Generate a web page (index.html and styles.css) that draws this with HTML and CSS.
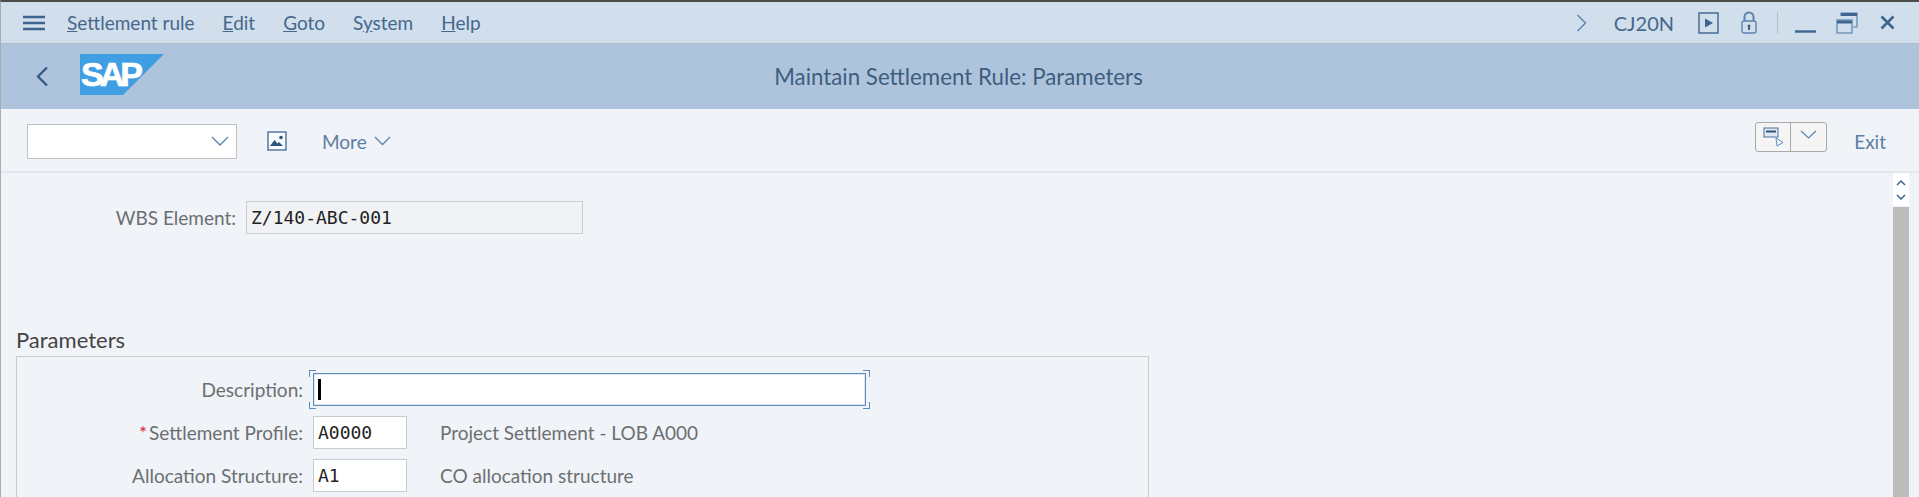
FILE: index.html
```html
<!DOCTYPE html>
<html lang="en">
<head>
    <meta charset="UTF-8">
    <title>Maintain Settlement Rule: Parameters</title>
    <link rel="stylesheet" href="styles.css">
</head>
<body>
    <div class="window">
        <!-- Menu bar -->
        <div class="menubar">
            <svg class="burger" width="22" height="16" viewBox="0 0 22 16">
                <path d="M0 2h22M0 8h22M0 14h22" stroke="#3d6590" stroke-width="2.4" fill="none"/>
            </svg>
            <nav class="menu">
                <span><u>S</u>ettlement rule</span>
                <span><u>E</u>dit</span>
                <span><u>G</u>oto</span>
                <span>S<u>y</u>stem</span>
                <span><u>H</u>elp</span>
            </nav>
            <div class="menubar-right">
                <svg class="tx-arrow" width="11" height="18" viewBox="0 0 11 18">
                    <path d="M1.5 1l8 8-8 8" stroke="#5b84b1" stroke-width="1.4" fill="none"/>
                </svg>
                <span class="tcode">CJ20N</span>
                <svg class="play" width="21" height="22" viewBox="0 0 21 22">
                    <rect x="1" y="1" width="19" height="20" fill="none" stroke="#3d6590" stroke-width="1.4"/>
                    <path d="M7 6.5l8 4.5-8 4.5z" fill="#3d6590"/>
                </svg>
                <svg class="lock" width="16" height="23" viewBox="0 0 16 23">
                    <path d="M3.5 10V6a4.5 4.5 0 0 1 9 0v4" fill="none" stroke="#5b84b1" stroke-width="2"/>
                    <rect x="1" y="10" width="14" height="12" rx="2" fill="none" stroke="#5b84b1" stroke-width="1.4"/>
                    <path d="M8 13l2 2.5H9V19H7v-3.5H6z" fill="#3d6590"/>
                </svg>
                <i class="sep"></i>
                <svg class="min" width="21" height="22" viewBox="0 0 21 22">
                    <path d="M0 19.5h21" stroke="#3d6590" stroke-width="2.4"/>
                </svg>
                <svg class="restore" width="22" height="22" viewBox="0 0 22 22">
                    <path d="M5 4V1h16v14h-4" fill="none" stroke="#5b84b1" stroke-width="1.2"/>
                    <path d="M5 2.5h16" stroke="#3d6590" stroke-width="3"/>
                    <rect x="1" y="8" width="15" height="13" fill="#d1deec" stroke="#5b84b1" stroke-width="1.2"/>
                    <path d="M1 10h15" stroke="#3d6590" stroke-width="3"/>
                </svg>
                <svg class="close" width="15" height="15" viewBox="0 0 15 15">
                    <path d="M1.5 1.5l12 12M13.5 1.5l-12 12" stroke="#3d6590" stroke-width="2.6" fill="none"/>
                </svg>
            </div>
        </div>

        <!-- Title bar -->
        <div class="titlebar">
            <svg class="back" width="13" height="21" viewBox="0 0 13 21">
                <path d="M11 1.5l-9 9 9 9" stroke="#32567c" stroke-width="2.2" fill="none"/>
            </svg>
            <svg class="logo" width="84" height="41" viewBox="0 0 84 41">
                <path d="M0 0h84L43 41H0z" fill="#3f9fe2"/>
                <text x="1" y="32" class="logo-text">SAP</text>
            </svg>
            <div class="title">Maintain Settlement Rule: Parameters</div>
        </div>

        <!-- Toolbar -->
        <div class="toolbar">
            <div class="combo">
                <svg width="18" height="10" viewBox="0 0 18 10">
                    <path d="M1 1l8 8 8-8" stroke="#5b84b1" stroke-width="1.3" fill="none"/>
                </svg>
            </div>
            <svg class="picture" width="20" height="20" viewBox="0 0 20 20">
                <rect x="1" y="1" width="18" height="18" fill="#f7f9fc" stroke="#4a7099" stroke-width="1.4"/>
                <path d="M3 15l4.5-6 3 3.5 1.5-1.5 4 4z" fill="#2f5579"/>
                <circle cx="14" cy="6.5" r="1.8" fill="#2f5579"/>
            </svg>
            <div class="more">
                More
                <svg width="17" height="10" viewBox="0 0 17 10">
                    <path d="M1 1l7.5 7.5L16 1" stroke="#5b84b1" stroke-width="1.3" fill="none"/>
                </svg>
            </div>
            <div class="toolbar-right">
                <div class="split-btn">
                    <span class="split-main">
                        <svg width="21" height="20" viewBox="0 0 21 20">
                            <rect x="1" y="1" width="14" height="9" fill="#dfe9f5" stroke="#4a7099"/>
                            <path d="M3 4.5h10" stroke="#2f5579" stroke-width="2"/>
                            <path d="M13 11l7 4.5-6 3.5z" fill="#f5f5f5" stroke="#5b8fc7"/>
                        </svg>
                    </span>
                    <span class="split-arrow">
                        <svg width="17" height="9" viewBox="0 0 17 9">
                            <path d="M1 1l7.5 7L16 1" stroke="#5b84b1" stroke-width="1.2" fill="none"/>
                        </svg>
                    </span>
                </div>
                <span class="exit">Exit</span>
            </div>
        </div>

        <!-- Content -->
        <div class="content">
            <main class="screen">
                <div class="wbs-row">
                    <label class="lbl wbs-lbl">WBS Element:</label>
                    <div class="field readonly">Z/140-ABC-001</div>
                </div>

                <h2 class="group-title">Parameters</h2>
                <section class="group">
                    <div class="form-row focus-row">
                        <label class="lbl">Description:</label>
                        <div class="field focused">
                            <i class="corner tl"></i><i class="corner tr"></i>
                            <i class="corner bl"></i><i class="corner br"></i>
                            <i class="caret"></i>
                        </div>
                    </div>
                    <div class="form-row">
                        <label class="lbl"><span class="req">*</span>Settlement Profile:</label>
                        <div class="field short">A0000</div>
                        <span class="desc">Project Settlement - LOB A000</span>
                    </div>
                    <div class="form-row">
                        <label class="lbl">Allocation Structure:</label>
                        <div class="field short">A1</div>
                        <span class="desc">CO allocation structure</span>
                    </div>
                </section>
            </main>
            <aside class="scrollbar">
                <div class="scroll-btns">
                    <svg width="10" height="6" viewBox="0 0 10 6"><path d="M1 5l4-4 4 4" stroke="#3d6590" stroke-width="1.5" fill="none"/></svg>
                    <svg width="10" height="6" viewBox="0 0 10 6"><path d="M1 1l4 4 4-4" stroke="#3d6590" stroke-width="1.5" fill="none"/></svg>
                </div>
                <div class="scroll-thumb"></div>
            </aside>
        </div>
    </div>
</body>
</html>
```

FILE: styles.css
```css
html, body {
    margin: 0;
    padding: 0;
    height: 100%;
}

body {
    overflow: hidden;
    background: #f0f3f8;
    font-family: Lato, "Noto Sans", sans-serif;
    color: #666;
}

.window {
    height: 497px;
    display: flex;
    flex-direction: column;
    border-top: 2px solid #4a4d4a;
    border-left: 1px solid #a9adb0;
    box-sizing: border-box;
}

/* Menu bar */
.menubar {
    height: 41px;
    flex: none;
    display: flex;
    align-items: center;
    background: #d1deec;
    border-bottom: 1px solid #b4bcc6;
    padding: 0 24px 0 22px;
}

.burger {
    margin-right: 22px;
}

.menu {
    display: flex;
    gap: 28px;
    font-size: 19px;
    color: #46688c;
}

.menubar-right {
    margin-left: auto;
    display: flex;
    align-items: center;
}

.tx-arrow {
    margin-right: 27px;
}

.tcode {
    font-size: 20px;
    color: #46688c;
    margin-right: 24px;
}

.play {
    margin-right: 22px;
}

.lock {
    margin-right: 20px;
}

.sep {
    width: 1px;
    height: 22px;
    background: #b4bfcc;
    margin-right: 17px;
}

.min {
    margin-right: 20px;
}

.restore {
    margin-right: 22px;
}

/* Title bar */
.titlebar {
    height: 65px;
    flex: none;
    position: relative;
    display: flex;
    align-items: center;
    background: #adc4dc;
    padding-left: 35px;
}

.logo {
    margin-left: 31px;
    margin-top: -5px;
}

.logo-text {
    font-family: "Liberation Sans", sans-serif;
    font-size: 34px;
    font-weight: 700;
    fill: #fff;
    stroke: #fff;
    stroke-width: 0.7px;
    letter-spacing: -4px;
}

.title {
    position: absolute;
    left: 0;
    right: 3px;
    text-align: center;
    font-size: 22.3px;
    color: #3f5e7e;
}

/* Toolbar */
.toolbar {
    height: 64px;
    flex: none;
    box-sizing: border-box;
    display: flex;
    align-items: center;
    border-bottom: 2px solid #dfe7f0;
    padding: 2px 33px 0 26px;
}

.combo {
    width: 210px;
    height: 35px;
    box-sizing: border-box;
    background: #fff;
    border: 1px solid #bfc3c6;
    display: flex;
    align-items: center;
    justify-content: flex-end;
    padding-right: 7px;
}

.picture {
    margin-left: 30px;
}

.more {
    margin-left: 35px;
    display: flex;
    align-items: center;
    gap: 7px;
    font-size: 19px;
    color: #5d7ea3;
}

.toolbar-right {
    margin-left: auto;
    display: flex;
    align-items: center;
}

.split-btn {
    display: flex;
    height: 30px;
    box-sizing: border-box;
    background: #f5f5f5;
    border: 1px solid #aaa;
    border-radius: 3px;
    margin-right: 27px;
    margin-top: -8px;
}

.split-main {
    width: 35px;
    border-right: 1px solid #aaa;
    display: flex;
    align-items: center;
    justify-content: center;
    padding-left: 1px;
    box-sizing: border-box;
}

.split-arrow {
    width: 35px;
    display: flex;
    align-items: center;
    justify-content: center;
    padding-bottom: 5px;
    box-sizing: border-box;
}

.exit {
    font-size: 19px;
    color: #5d7ea3;
}

/* Content */
.content {
    flex: 1;
    min-height: 0;
    display: flex;
    overflow: hidden;
}

.screen {
    flex: 1;
    padding-left: 15px;
}

.wbs-row {
    display: flex;
    align-items: center;
    height: 33px;
    margin-top: 28px;
    gap: 10px;
}

.lbl {
    font-size: 19px;
    color: #6c6f72;
    text-align: right;
    white-space: nowrap;
}

.wbs-lbl {
    width: 220px;
}

.field {
    box-sizing: border-box;
    height: 33px;
    line-height: 31px;
    border: 1px solid #c9cccf;
    background: #fff;
    padding-left: 4px;
    font-family: "DejaVu Sans Mono", monospace;
    font-size: 18px;
    color: #222;
}

.readonly {
    width: 337px;
    background: #f0f2f4;
}

.group-title {
    margin: 93px 0 3px;
    font-size: 22px;
    line-height: 26px;
    font-weight: 400;
    color: #444;
}

.group {
    width: 1133px;
    height: 200px;
    box-sizing: border-box;
    border: 1px solid #c9cccf;
    padding-top: 16px;
}

.form-row {
    display: flex;
    align-items: center;
    height: 33px;
    margin-bottom: 10px;
}

.form-row .lbl {
    width: 286px;
    margin-right: 10px;
}

.req {
    color: #d0253f;
    margin-right: 2px;
}

.short {
    width: 94px;
}

.desc {
    margin-left: 33px;
    font-size: 19px;
    color: #6c6f72;
}

.focused {
    position: relative;
    width: 553px;
    border: 1px solid #5f8cbc;
    box-shadow: inset 0 0 0 1px #dbe6f2;
}

.caret {
    position: absolute;
    left: 4px;
    top: 5px;
    width: 3px;
    height: 21px;
    background: #000;
}

.corner {
    position: absolute;
    width: 6px;
    height: 6px;
    border: 0 solid #5f8cbc;
}

.tl { left: -5px; top: -4px; border-width: 1px 0 0 1px; }
.tr { right: -5px; top: -4px; border-width: 1px 1px 0 0; }
.bl { left: -5px; bottom: -4px; border-width: 0 0 1px 1px; }
.br { right: -5px; bottom: -4px; border-width: 0 1px 1px 0; }

/* Scrollbar */
.scrollbar {
    width: 16px;
    flex: none;
    margin-right: 10px;
    display: flex;
    flex-direction: column;
}

.scroll-btns {
    height: 33px;
    background: #fff;
    display: flex;
    flex-direction: column;
    align-items: center;
    justify-content: center;
    gap: 8px;
}

.scroll-thumb {
    flex: 1;
    margin-top: 1px;
    background: #bcbcbc;
}
```
